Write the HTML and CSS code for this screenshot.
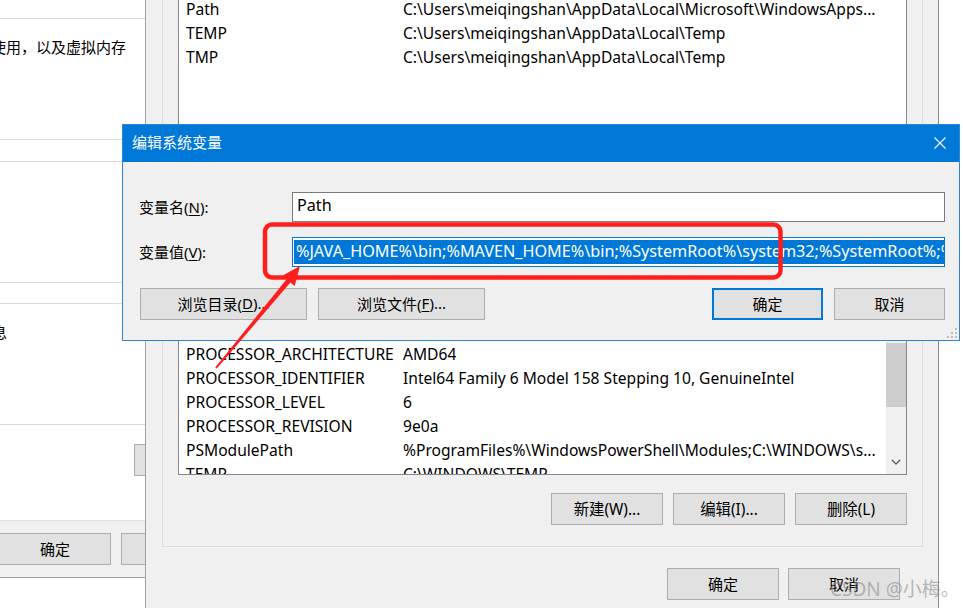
FILE: index.html
```html
<!DOCTYPE html>
<html lang="zh-CN">
<head>
<meta charset="utf-8">
<title>编辑系统变量</title>
<link rel="stylesheet" href="styles.css">
</head>
<body>
<div class="screen">

  <section class="win-left">
    <div class="l-band l-b0"></div>
    <div class="l-band l-b1"><p class="l-text l-t1">使用，以及虚拟内存</p></div>
    <div class="l-band l-b2"></div>
    <div class="l-band l-b3"></div>
    <div class="l-band l-b4"></div>
    <div class="l-band l-b5"><p class="l-text l-t2">息</p></div>
    <div class="l-b6"><span class="btn l-small"></span></div>
    <div class="l-footer">
      <span class="btn l-ok">确定</span>
      <span class="btn l-cancel"></span>
    </div>
  </section>

  <section class="win-env">
    <div class="group">
      <div class="list list-user">
        <div class="row"><span class="name">Path</span><span class="val">C:\Users\meiqingshan\AppData\Local\Microsoft\WindowsApps...</span></div>
        <div class="row"><span class="name">TEMP</span><span class="val">C:\Users\meiqingshan\AppData\Local\Temp</span></div>
        <div class="row"><span class="name">TMP</span><span class="val">C:\Users\meiqingshan\AppData\Local\Temp</span></div>
      </div>
      <div class="list list-sys">
        <div class="rows">
          <div class="row"><span class="name">JAVA_HOME</span><span class="val">C:\Program Files\Java\jdk1.8.0</span></div>
          <div class="row"><span class="name">MAVEN_HOME</span><span class="val">D:\apache-maven</span></div>
          <div class="row"><span class="name">NUMBER_OF_PROCESSORS</span><span class="val">12</span></div>
          <div class="row"><span class="name">Path</span><span class="val">%JAVA_HOME%\bin;%MAVEN_HOME%\bin</span></div>
          <div class="row"><span class="name">PROCESSOR_ARCHITECTURE</span><span class="val">AMD64</span></div>
          <div class="row"><span class="name">PROCESSOR_IDENTIFIER</span><span class="val">Intel64 Family 6 Model 158 Stepping 10, GenuineIntel</span></div>
          <div class="row"><span class="name">PROCESSOR_LEVEL</span><span class="val">6</span></div>
          <div class="row"><span class="name">PROCESSOR_REVISION</span><span class="val">9e0a</span></div>
          <div class="row"><span class="name">PSModulePath</span><span class="val">%ProgramFiles%\WindowsPowerShell\Modules;C:\WINDOWS\s...</span></div>
          <div class="row"><span class="name">TEMP</span><span class="val">C:\WINDOWS\TEMP</span></div>
        </div>
        <div class="scrollbar">
          <div class="thumb"></div>
          <div class="sb-down">
            <svg width="10" height="6" viewBox="0 0 10 6"><path d="M0.8 0.8 L5 5 L9.2 0.8" fill="none" stroke="#606060" stroke-width="1.3"/></svg>
          </div>
        </div>
      </div>
      <div class="btn-row">
        <span class="btn btn-md">新建(W)...</span>
        <span class="btn btn-md">编辑(I)...</span>
        <span class="btn btn-md">删除(L)</span>
      </div>
    </div>
    <div class="env-footer">
      <span class="btn btn-md">确定</span>
      <span class="btn btn-md">取消</span>
    </div>
  </section>

  <section class="dlg">
    <header class="dlg-title">
      <span class="dlg-title-text">编辑系统变量</span>
      <svg class="dlg-close" width="12" height="12" viewBox="0 0 12 12"><path d="M0.5 0.5 L11.5 11.5 M11.5 0.5 L0.5 11.5" stroke="#fff" stroke-width="1.1" fill="none"/></svg>
    </header>
    <div class="dlg-body">
      <div class="field">
        <span class="label">变量名(<u>N</u>):</span>
        <div class="input input-name">Path</div>
      </div>
      <div class="field">
        <span class="label">变量值(<u>V</u>):</span>
        <div class="input input-focus"><span class="sel">%JAVA_HOME%\bin;%MAVEN_HOME%\bin;%SystemRoot%\system32;%SystemRoot%;%SystemRoot%\System32\Wbem</span></div>
      </div>
      <div class="dlg-btns">
        <span class="btn btn-wide">浏览目录(<u>D</u>)...</span>
        <span class="btn btn-wide">浏览文件(<u>F</u>)...</span>
        <span class="spacer"></span>
        <span class="btn btn-md btn-default">确定</span>
        <span class="btn btn-md">取消</span>
      </div>
    </div>
    <svg class="grip" width="12" height="12" viewBox="0 0 12 12">
      <rect x="9" y="1" width="2" height="2" fill="#bcbcbc"/>
      <rect x="5" y="5" width="2" height="2" fill="#bcbcbc"/>
      <rect x="9" y="5" width="2" height="2" fill="#bcbcbc"/>
      <rect x="1" y="9" width="2" height="2" fill="#bcbcbc"/>
      <rect x="5" y="9" width="2" height="2" fill="#bcbcbc"/>
      <rect x="9" y="9" width="2" height="2" fill="#bcbcbc"/>
    </svg>
  </section>

  <svg class="annot" width="963" height="608" viewBox="0 0 963 608">
    <rect x="265" y="224.5" width="515.5" height="53" rx="7" ry="7" fill="none" stroke="#ff1e1e" stroke-width="4.5"/>
    <polygon points="300,266 294.7,286 290.4,282.5 216.8,368.6 215.2,367.4 286.6,279.3 282.3,275.8" fill="#ff1e1e"/>
  </svg>

  <div class="watermark">CSDN @小梅。</div>
</div>
</body>
</html>
```

FILE: styles.css
```css
* { box-sizing: border-box; }
html, body { margin: 0; padding: 0; }
body {
  width: 963px;
  height: 608px;
  overflow: hidden;
  background: #fff;
  font-family: "Noto Sans", "Noto Sans CJK SC", sans-serif;
  font-size: 15px;
  color: #000;
}
.screen { position: relative; width: 963px; height: 608px; overflow: hidden; }

.btn {
  display: flex;
  align-items: center;
  justify-content: center;
  height: 32px;
  flex: none;
  background: #e1e1e1;
  border: 1px solid #adadad;
  white-space: nowrap;
  padding-bottom: 2px;
}
u { text-underline-offset: 2px; text-decoration-thickness: 1px; }

/* left window (system properties) */
.win-left {
  position: absolute;
  left: 0;
  top: 0;
  width: 145px;
  height: 608px;
  background: #fff;
  display: flex;
  flex-direction: column;
  overflow: hidden;
}
.l-band { flex: none; border-bottom: 1px solid #dadada; }
.l-b0 { height: 19px; }
.l-b1 { height: 121px; }
.l-b2 { height: 22px; }
.l-b3 { height: 121px; }
.l-b4 { height: 21px; }
.l-b5 { height: 121px; }
.l-b6 { height: 95px; flex: none; padding-top: 19px; }
.l-text { margin: 0; padding-top: 18px; line-height: 20px; white-space: nowrap; }
.l-t1 { margin-left: -9px; }
.l-t2 { margin-left: -8px; }
.l-small { width: 30px; margin-left: 134px; }
.l-footer {
  height: 58px;
  flex: none;
  background: #f0f0f0;
  border-top: 1px solid #dfdfdf;
  border-bottom: 1px solid #a0a0a0;
  display: flex;
  padding-top: 12px;
  gap: 10px;
}
.l-ok { width: 112px; margin-left: -1px; }
.l-cancel { width: 60px; }

/* environment variables window */
.win-env {
  position: absolute;
  left: 145px;
  top: 0;
  width: 794px;
  height: 608px;
  background: #f0f0f0;
  border-left: 1px solid #a0a0a0;
  border-right: 1px solid #8c8c8c;
  display: flex;
  flex-direction: column;
}
.group {
  margin: -20px 15px 0 16px;
  border: 1px solid #dcdcdc;
  padding: 0 15px 21px;
  display: flex;
  flex-direction: column;
}
.list {
  background: #fff;
  border: 1px solid #828790;
  overflow: hidden;
  flex: none;
}
.list-user { margin-top: 9px; height: 210px; padding-top: 7px; }
.list-sys { margin-top: 46px; height: 229px; display: flex; }
.rows { flex: 1; min-width: 0; }
.row {
  display: flex;
  height: 24px;
  line-height: 23px;
  padding: 0 0 1px 7px;
  white-space: nowrap;
  font-size: 15.6px;
}
.name { width: 217px; flex: none; }
.val { overflow: hidden; }
.scrollbar {
  width: 20px;
  flex: none;
  background: #f0f0f0;
  display: flex;
  flex-direction: column;
}
.thumb { margin-top: 96px; height: 64px; background: #cdcdcd; }
.sb-down {
  margin-top: auto;
  height: 22px;
  display: flex;
  align-items: center;
  justify-content: center;
  padding-bottom: 2px;
}
.btn-row {
  margin-top: 18px;
  display: flex;
  justify-content: flex-end;
  gap: 10px;
}
.btn-md { width: 112px; }
.btn-row .btn-md { font-size: 15.4px; }
.env-footer {
  margin-top: 21px;
  display: flex;
  justify-content: flex-end;
  gap: 9px;
  padding-right: 38px;
}

/* edit dialog */
.dlg {
  position: absolute;
  left: 122px;
  top: 124px;
  width: 838px;
  height: 217px;
  background: #f0f0f0;
  border: 1px solid #2a86d8;
  display: flex;
  flex-direction: column;
}
.dlg-title {
  height: 37px;
  flex: none;
  background: #0078d7;
  color: #fff;
  display: flex;
  align-items: center;
  justify-content: space-between;
  padding: 0 13px 0 9px;
}
.dlg-title-text { line-height: 20px; padding-bottom: 4px; }
.dlg-close { margin-bottom: 1px; }
.dlg-body {
  flex: 1;
  padding: 30px 14px 0 16px;
  display: flex;
  flex-direction: column;
}
.field { display: flex; align-items: center; height: 30px; flex: none; }
.field + .field { margin-top: 15px; }
.label { width: 153px; flex: none; white-space: nowrap; padding-bottom: 2px; }
.input {
  flex: 1;
  min-width: 0;
  height: 30px;
  background: #fff;
  border: 1px solid #7a7a7a;
  padding: 2px 1px;
  line-height: 24px;
  white-space: nowrap;
  overflow: hidden;
  font-size: 16.2px;
}
.input-name { padding: 0 4px 4px; }
.input-focus { border-color: #0078d7; }
.sel {
  display: inline-block;
  background: #0078d7;
  color: #fff;
  padding: 0 2px 2px;
  line-height: 22px;
  vertical-align: top;
}
.dlg-btns { margin-top: 21px; display: flex; gap: 11px; height: 32px; }
.btn-wide { width: 167px; margin-left: 1px; }
.btn-wide + .btn-wide { margin-left: 0; }
.spacer { flex: 1; }
.btn-default { border: 2px solid #0078d7; }
.dlg-btns .btn-md { width: 111px; }
.grip { position: absolute; right: 1px; bottom: 1px; }

/* annotations */
.annot { position: absolute; left: 0; top: 0; pointer-events: none; }
.watermark {
  position: absolute;
  left: 830px;
  top: 576px;
  font-size: 19px;
  line-height: 26px;
  color: rgba(140, 140, 140, 0.6);
  white-space: nowrap;
  pointer-events: none;
}
```
